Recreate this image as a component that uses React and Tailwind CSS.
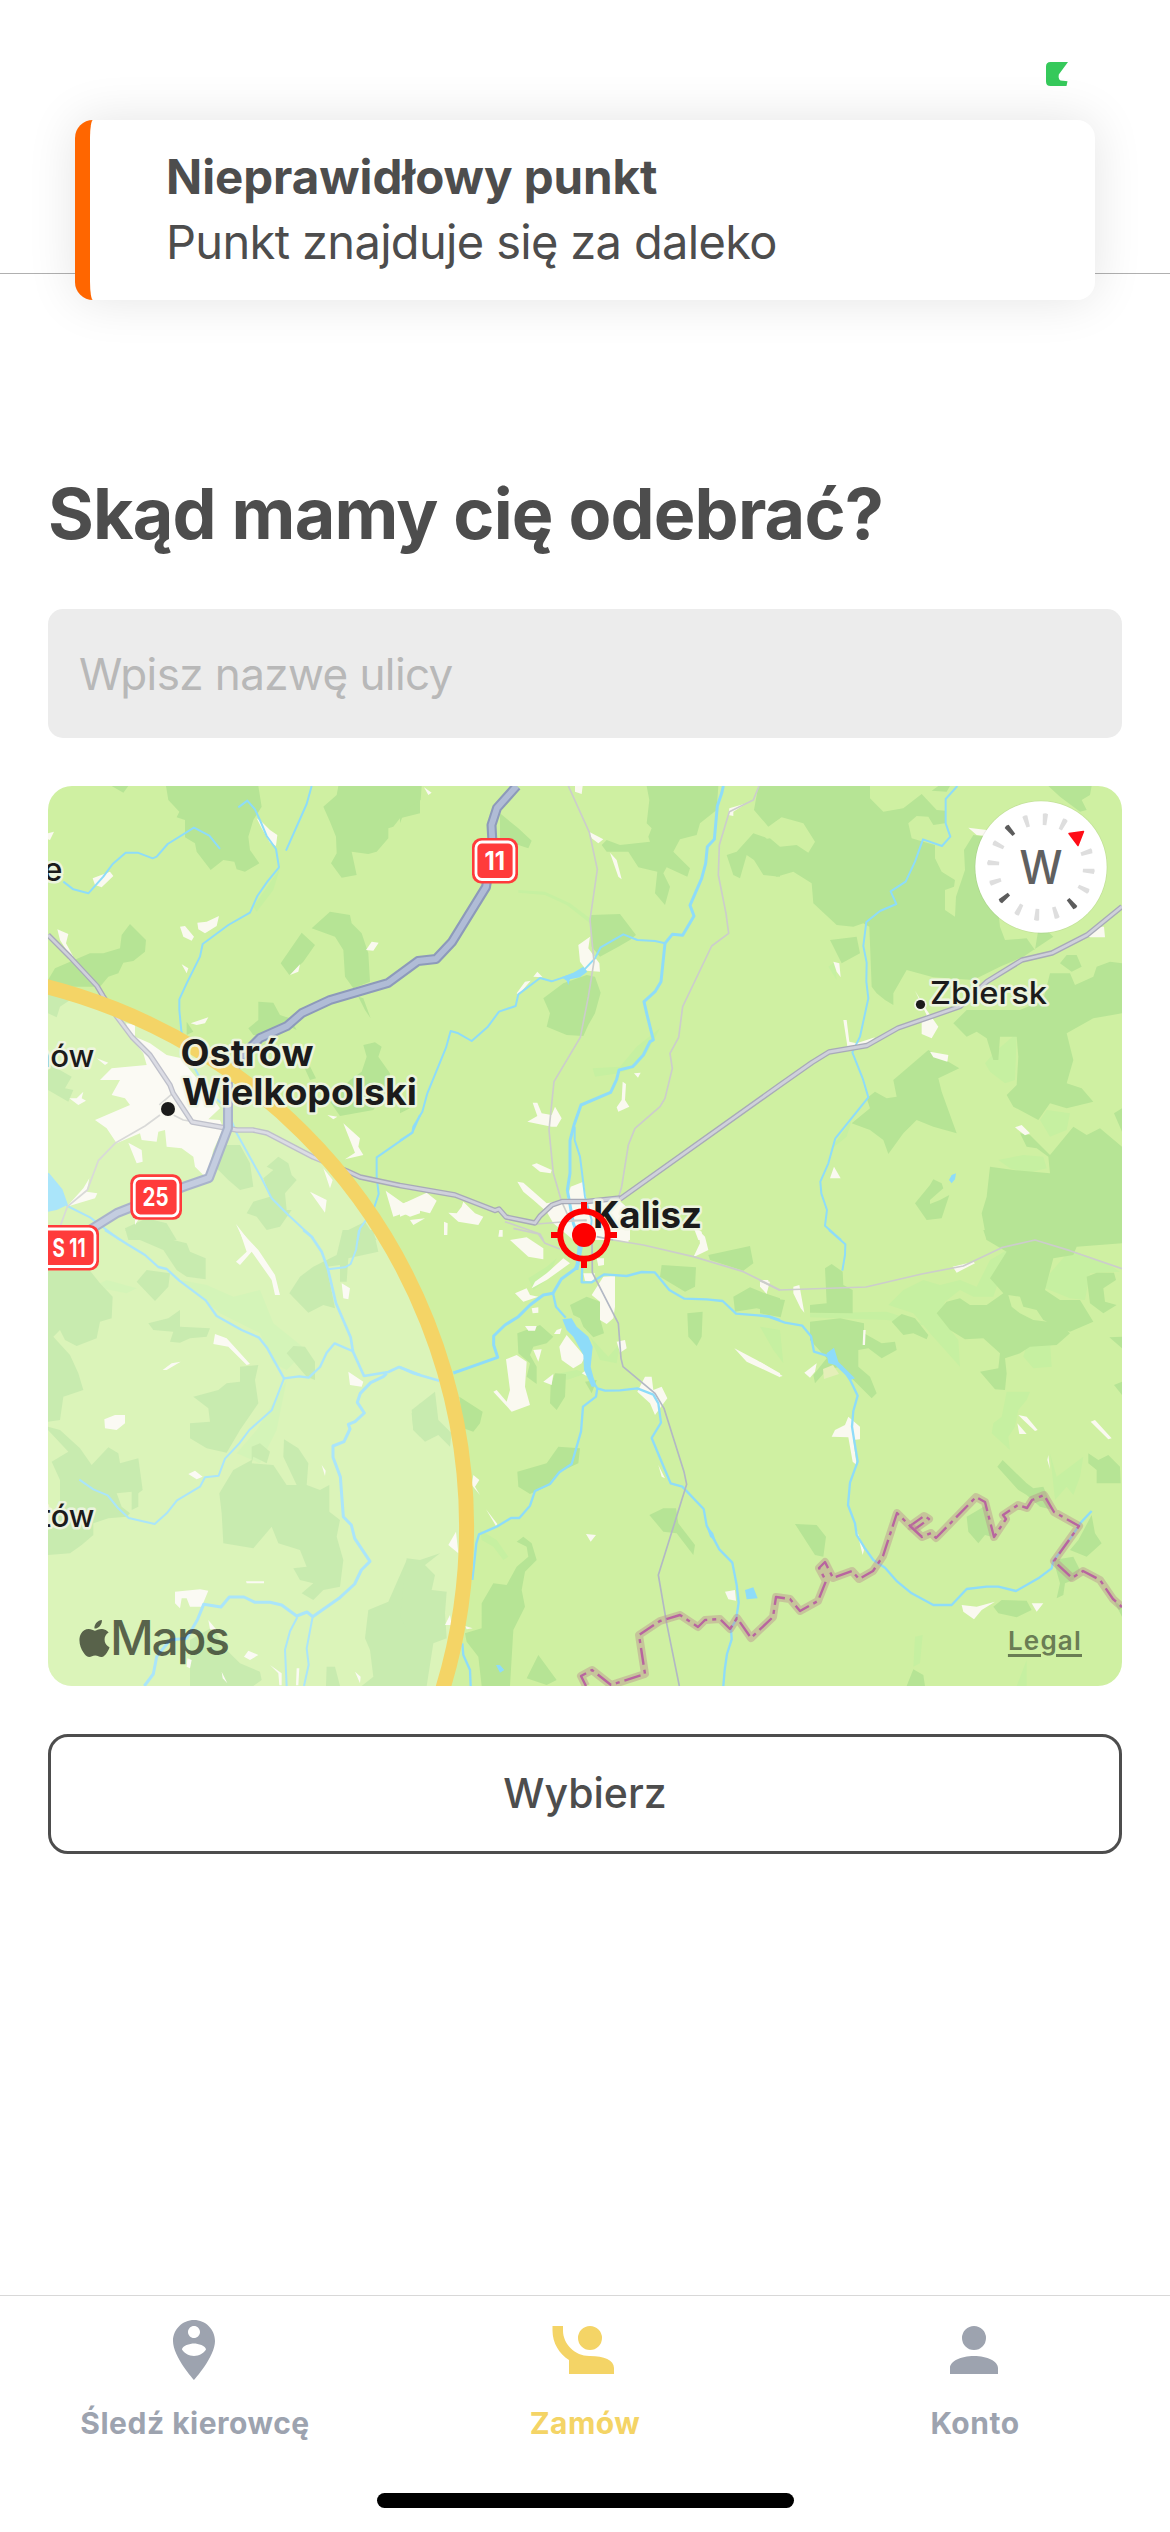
import React from "react";
import { SiApple } from "react-icons/si";

const FONT = "font-['Inter','Liberation_Sans',sans-serif]";

const WATER = "#8edcf9";

/* The map is drawn in six tiles, each in its own 3x coordinate space. */
const TILES = [
  {
    at: "translate(40 780) scale(0.33333)",
    meadow: "M140 350L170 405M640 380L720 265L700 330L650 395Z",
    forest:
      "M378 18H655L665 80L640 120L625 170L630 210L658 250L615 275L590 268L583 245L550 240L512 270L470 215L465 190L435 172L435 120L410 112L418 95L385 60Z M215 18H265L250 38Z M895 18H1140V100L1080 115L1060 140L1045 145L1045 175L1010 215L985 222L935 215L950 285L905 293L873 250L890 220L888 170L870 125L850 80L890 45Z M270 432L318 480L315 515L280 543L250 548L235 580L205 590L180 620L60 620L24 600L45 565L150 520L190 520L240 505L245 465Z M24 640L90 660L60 680L50 712L24 700Z M24 850L95 890L75 925L100 930L85 965L24 930Z M815 445L870 395L930 405L935 430L965 460L985 520L990 605L940 625L915 590L910 510L885 470Z M785 458L825 495L790 545L748 585L722 550Z M655 665L700 668L720 705L750 715L770 750L750 740L700 770L640 765L625 745L655 720Z M955 650L970 655L992 715L975 690Z M440 725L460 755L440 765Z M760 790L790 820L828 895L810 900Z M970 795L1005 787L1025 800L1015 830L1050 880L1045 930L1000 990L900 1008L870 965L930 900L965 875L980 830Z M530 1095L600 1095L630 1150L640 1220L600 1230L565 1200L515 1150Z M715 1130L745 1150L755 1185L770 1200L735 1240L740 1290L755 1290L720 1340L680 1350L650 1310L620 1300L640 1265L690 1250L670 1195L700 1170L680 1160Z M255 1345L320 1315L380 1330L410 1380H265Z M975 1325L1010 1380H910L925 1350Z",
    town:
      "M650 115L665 125L690 150L712 165L708 198L690 188L665 145Z M158 295L210 275L220 288L185 322L165 315Z M24 160L42 155L30 180L24 178Z M52 448L85 462L78 490L100 530L85 520L60 480Z M420 440L435 438L462 470L455 482L430 470Z M472 428L500 425L537 408L530 438L495 460L475 448Z M425 553L445 565L440 580Z M750 585L780 553L775 575Z M978 510L995 485L1016 488L1000 512Z M452 730L505 712L495 730L470 735Z M258 730L285 735L285 770L330 790L380 825L425 835L450 870L500 930L540 985L505 1018L540 1020L550 1045L520 1110L500 1195L465 1160L460 1130L425 1105L380 1100L375 1050L355 1055L350 1085L305 1080L300 1060L230 1090L200 1045L165 1020L200 1005L270 975L255 955L215 945L240 900L180 900L215 865L320 855L310 820L270 770Z M170 835L205 848L195 855Z M88 955L110 955L130 935L125 955L138 962L115 975Z M265 1088L305 1110L308 1145L290 1150Z M148 1195L140 1235L172 1240L165 1255L80 1280L130 1225Z M862 1005L892 1010L880 1018Z M910 1030L960 1075L955 1100L970 1125L915 1138L945 1118Z M850 1165L878 1200L870 1225Z M810 1235L860 1260L855 1298Z M1037 1232L1090 1270L1140 1255V1300L1110 1310L1090 1300L1060 1310Z M588 1332L625 1380H610Z M285 1320L300 1310L285 1335Z",
    lake: "M24 1185L65 1230L82 1275L50 1290L24 1295Z",
    rivers: [
      ["M70 305L100 328L145 340L190 290L218 252L257 218H293L338 235L350 230L383 192L462 143L508 167L540 207", 6],
      ["M595 82L622 62L645 88L662 125L680 168L708 207L717 262L682 305L652 348L630 398L565 435L488 492L480 530L440 610L418 658V690L424 752L445 830L500 930L560 985L590 1060L665 1195L695 1255L745 1305L820 1375", 6],
      ["M815 18L800 72L738 212", 6],
      ["M24 1180L65 1230L82 1278L150 1312L240 1380", 6],
      ["M1140 1005L1117 1058L1010 1132V1190L1016 1242L1000 1290L960 1345L953 1380", 6],
    ],
    thin: ["M360 1005L315 1038L225 1090L175 1142L142 1230L82 1280L62 1335", "M358 975L398 940M400 1005L430 1020L460 1025"],
    thinGrey: [],
  },
  {
    at: "translate(400 780) scale(0.33333)",
    meadow:
      "M355 330L435 335L510 370L570 415V430L500 375L435 345L355 338Z M578 865L660 860L710 800L780 745L740 820L700 865L655 880L585 890Z",
    forest:
      "M0 18H65L62 60L15 90L0 130Z M300 100L355 145L395 182L385 205L325 185L300 175Z M740 18H955L950 90L900 130L890 165L840 178L820 215L870 265L862 290L800 262L790 280L810 320L795 375L765 340L772 275L715 262L685 215L620 215L605 195L620 180L660 195L750 185L745 170L755 145L740 130L748 60Z M1075 18H1140V115L1105 140L1062 90Z M980 225L1010 215L1060 160L1095 172L1140 210V290L1090 285L1062 240L1040 225L1020 295L1000 285Z M572 405L660 402L708 465L690 480L655 500L600 530L575 500Z M430 655L490 610L560 585L585 590L602 638L585 700L565 735L550 768L500 765L440 740L450 700Z M0 980L30 985L0 1000Z",
    town:
      "M72 22L95 38L85 45Z M525 18H548L545 42L525 35Z M567 155L610 178L595 190L575 175Z M630 218L650 240L665 298L655 290Z M988 85L1040 70L1000 95L1000 108L985 105Z M535 495L570 470L565 505L598 550L600 575L560 572L540 545Z M350 640L375 605L392 602L355 645Z M400 590L412 575L428 592Z M702 880L722 878L714 893Z M668 905L678 912L675 960L688 980L655 995L650 982L665 960Z M398 968L412 968L425 1000L455 1005L465 980L485 1015L470 1040L455 1040L382 1025L412 1008Z M395 1155L410 1150L455 1170L452 1180L420 1175Z M352 1205L370 1208L440 1270L480 1262L500 1262L512 1220L550 1205L560 1260L650 1255L690 1290V1380H520L460 1330L440 1295L400 1260L370 1235Z M0 1275L80 1238L110 1262L90 1300L50 1290L0 1310Z M30 1320L75 1315L40 1335Z M145 1298L170 1300L185 1280L190 1265L225 1300L250 1310L235 1335L175 1325L160 1312Z M132 1325L143 1330L142 1365H132Z M298 1350L308 1350V1370H295Z M880 1340L905 1355L908 1380H895Z",
    lake: "M485 592L520 578L550 560L562 575L540 592L510 598L505 615L500 602Z",
    rivers: [
      ["M970 18L965 40L952 78L943 178L922 200L917 250L905 295L870 376L882 408L848 466L817 463L795 490", 9],
      ["M795 490L783 605L765 635L732 665L742 708L760 780L750 785L730 825L698 860L657 870L650 898L632 937L543 975L522 1035L510 1082V1180L502 1230L520 1330L540 1380", 9],
      ["M795 490L765 483L712 480L670 463L602 502L585 535L550 572L455 604L420 594L355 643L347 678L297 695L262 742L215 783L175 760L152 753L138 803L82 940L67 995L40 1040L37 1058L0 1082", 6],
      ["M524 1040V1080L540 1130L555 1250L575 1320L570 1380", 6],
    ],
    thin: [
      "M505 18L568 157L592 268L570 420L582 545L565 650L541 772L462 905L447 1050L460 1180L485 1265L510 1320L560 1322",
      "M1077 18L1060 60L988 95L958 195L955 285L978 400L986 460L935 498L848 680L836 772L810 820L817 865L795 955L780 980L705 1045L685 1095L665 1220L655 1255",
      "M315 1325L420 1362L430 1380M410 1332L560 1320",
    ],
    thinGrey: [],
  },
  {
    at: "translate(760 780) scale(0.33333)",
    meadow:
      "M675 850L705 815L770 760L765 900L735 910L690 875Z M715 1140L790 1125L850 1130L860 1165L800 1180L750 1165Z M840 1020L860 990L930 1000L920 1050L870 1070Z M275 1020L210 1110L260 1070Z M225 545L205 560L230 600Z",
    forest:
      "M0 18H330V55L370 95L430 85L485 42L530 90L555 92V130L520 135L505 110L470 108L445 130L455 175L490 185L525 195V235L545 275L585 300L582 320L555 330V390L585 410L588 350L615 270L612 210L640 165L680 170L700 260L720 440L735 480L800 475L825 510L838 430L880 470L790 530L720 560L640 600L520 592L440 570L400 640V675L375 660L350 640L335 620L328 440L310 430L280 440L230 435L160 370L155 310L100 275L50 290L0 265V180L30 175L60 200L110 195L145 218L165 185L130 130L65 112L30 132L0 100Z M535 18H570L560 35L515 32Z M865 18H995L990 45L965 60L980 90L960 95L900 50Z M210 480L290 470L300 520L245 550Z M900 550L920 525L950 525L965 560L935 575Z M870 580H930L945 615L1000 590L1010 560L1050 545L1086 550V700L1000 715L920 760L940 840L920 910L965 925L1000 965L920 985L870 970L835 1020L760 980L740 945L770 915L775 830L770 770L720 770L715 840H700L680 775L650 755L620 770L580 730L620 690L780 690L850 660Z M505 810L598 865L535 895L545 935L590 1060L520 1040L470 1020L430 1060L385 1122L370 1080L330 1050L275 1030L330 985L320 955L345 935L380 955L410 950L400 900Z M1062 1000L1086 985V1055Z M1086 1050V1380H680L665 1300L680 1250L690 1160L760 1170L870 1180L865 1130L830 1105L800 1100L780 1060L810 1065L870 1125L940 1040L980 1065L1020 1045L1086 1100Z M465 1270L510 1215L520 1198L545 1210L550 1225L510 1260V1272L540 1260L568 1245L545 1315L500 1320Z",
    town:
      "M625 143L680 150V168L650 165Z M975 460L1010 440H1032L1035 472H990Z M220 545L238 550L242 592L230 575Z M465 632L500 690L535 740L515 775L485 762L485 725L500 705Z M250 720L260 720L268 785L290 790L345 772L320 795L262 798Z M510 815L565 825L562 845L520 832Z M765 1042L785 1035L810 1060L795 1066Z M222 1160L242 1195L210 1195Z",
    lake: "M575 1185L588 1180L585 1198L575 1210L567 1200Z",
    rivers: [
      ["M592 18L557 57V130L571 170L546 198L489 178L465 245L437 305L392 334L409 372L360 393L319 426L310 498L320 548L319 605L325 655L300 770L277 817L308 895L325 952L226 1075L205 1150L181 1205L184 1240L201 1290L195 1337L243 1380", 6],
    ],
    thin: [],
    thinGrey: [],
  },
  {
    at: "translate(40 1230) scale(0.33333)",
    meadow:
      "M420 150L500 165L580 200L660 180L700 280L800 360L740 420L700 400L660 310L540 250Z M740 450L710 600L660 700L590 670L650 600Z M160 170L200 150L290 175L260 190Z",
    forest:
      "M255 0H375L400 30L440 40L450 65L497 85V148L440 140L410 120L370 60L300 30Z M908 0H1000L1015 65L925 85L920 155L900 155V105L860 110L885 235L850 225L805 248L748 190L780 140L820 110L890 75Z M24 122L150 122L180 160L218 200L215 265L180 275L170 325L110 348L75 330L60 300L40 320L90 375L115 430L130 480L70 500L60 570L24 575Z M290 155L320 120L390 130L385 170L345 213Z M325 280L385 265L420 240V290L510 295L500 320L450 325L420 338L390 335L400 305L340 300Z M740 370L760 348L795 350L825 395L825 450L800 440Z M600 410L655 405L645 450L655 520L600 600L560 668L500 655L450 625V580L510 575L505 535L460 500L535 480L560 460L600 455Z M24 590L60 600L120 655L155 705L205 652L235 670L240 700L295 685L308 780L295 790V830L275 840V785L230 790L245 830L270 850L260 860L205 865L160 880V915L125 945L90 970L24 975V900L60 820L60 750L35 695L85 665L24 600Z M635 650L660 640L690 665L680 700L640 680L635 700L700 705L740 765L770 765L730 680L732 628L775 655L805 700L800 765L840 780L868 765V845L900 870L890 920L910 990L900 1070L850 1080L820 1110L785 1090L820 1060L780 1050L760 1015L800 1010L780 960L715 940L695 890L640 955L550 940L545 850L538 790L580 720L635 690Z M1115 550L1140 520V620L1120 600Z M985 1140L1045 1115L1100 990L1140 990V1368H965L1000 1340L990 1260L975 1225Z M450 1230L520 1190L550 1250L600 1300L660 1325L665 1350L640 1368H450Z M860 1310L885 1310L900 1368H858Z",
    town:
      "M598 0L655 60L705 135L720 195L705 195L695 150L635 65L600 105L588 95L620 65Z M905 160L930 175L925 208L910 205Z M525 312L560 325L630 402L620 405L565 350L520 342Z M368 420L395 400L422 395L380 420Z M193 568L225 555L255 555V580L230 600L195 595Z M925 425L970 455L965 470L930 465Z M445 732L465 722L488 740L470 748Z M845 705L857 722L855 738Z M618 1054H672V1060H620Z M405 1085L480 1078L505 1082L485 1130L450 1130L440 1105L425 1105L420 1135L405 1120Z M505 1170L530 1200L510 1198Z M612 1280L625 1262L655 1275L630 1290Z M690 1305L725 1330V1366H718L715 1330Z M545 1325L562 1360L548 1345Z M945 1325L962 1340L960 1360Z M442 1285L455 1290L450 1315L440 1310Z M770 1315H778L775 1366H768Z",
    lake: "",
    rivers: [
      ["M195 0L262 43L315 75L355 111L380 117L418 152L497 211L530 258L605 300L657 323L682 355L732 445L778 439L806 443L840 411L860 368L884 340L937 363", 7],
      ["M732 445L695 541L628 600L598 640L555 686L536 737L495 742L480 770L411 811L380 850L344 882L266 864L234 834L203 796L160 778L118 749", 6],
      ["M790 0L815 20L845 65L864 118L888 220L932 322L939 365L972 438L1045 426L1077 411L1140 435", 8],
      ["M957 0L948 60L932 102L915 112L864 118", 6],
      ["M1040 430L1030 440L992 458L961 490L952 517L973 549L945 575L925 583L930 597L912 635L879 648V682L901 740L910 860L934 885L944 925L990 994L964 1020L944 1062L897 1105L818 1160L801 1146L770 1158L725 1125L690 1117H645L612 1101H568L543 1131L491 1123L472 1170L440 1225L390 1230L350 1280L340 1332L313 1368", 9],
      ["M772 1162L750 1204L735 1259L740 1368", 6],
      ["M818 1160L800 1255L806 1304L792 1368", 6],
    ],
    thin: [],
    thinGrey: [],
  },
  {
    at: "translate(400 1230) scale(0.33333)",
    meadow:
      "M470 85L440 110L385 145L400 180L440 150Z M570 320L625 380L660 340L650 400L600 390Z M560 430L500 450L480 430L530 420Z M240 900L290 930L325 980L310 990L280 950L245 930Z",
    forest:
      "M925 75L1050 48L1060 100L1030 122L930 90Z M785 105L888 112L885 170L855 185L780 140Z M1000 200L1050 172L1095 190L1140 205V250L1070 235L1005 245Z M510 225L560 200L600 215V265L612 310L580 322L550 290L540 265L520 255Z M862 250L908 245L905 320L890 348L865 320Z M352 310L420 285L460 320L440 340L400 350L390 375L410 410V462L380 440L390 400L355 370Z M465 430L498 432L495 500L470 540L450 520L452 465Z M555 455L590 450L575 490Z M178 500L248 545L240 580L220 605L190 595Z M35 540L105 485L115 570L155 610L150 650L115 615L75 635L40 600Z M352 725L440 700L475 650L540 655L535 700L480 725L450 765L390 792L355 770Z M748 855L790 835L828 835L835 880L885 945L880 975L830 910L790 905Z M350 935L370 920L395 940L410 990L375 1025L365 1080L375 1130L340 1200L330 1368H245L235 1280L200 1235L195 1210L245 1195V1120L280 1060L320 1065L350 1010L385 980L380 950Z M20 985L60 990L120 970L75 1005L105 1035L95 1080L140 1085L135 1150L140 1225L100 1240L80 1368H0V1210L20 1200L0 1160Z M415 1275L470 1350L440 1365L380 1345Z",
    town:
      "M330 30L380 22L430 55L430 88L385 80Z M490 85L510 100L440 150L395 175L405 155L440 130Z M345 190L380 175L390 195L415 200L370 215Z M395 235L415 232V248L398 250Z M375 288L410 288L405 302L385 302Z M470 300L485 295L480 312L462 312Z M478 350L500 315L555 380L545 400L520 415L485 390Z M400 360L425 358L415 395Z M318 388L350 375L380 395L375 470L390 525L335 545L280 485L290 480L320 515L330 480Z M430 455L460 432L455 465Z M575 195L610 140L645 138L645 230L640 265L620 282L600 270L600 215Z M550 130H585L580 155L555 152Z M650 335L675 330L680 355L660 368Z M590 85H612V105L595 108Z M625 0H690L685 38L650 30Z M895 0L915 20L925 60L880 82L900 40Z M1085 150L1110 155L1100 190L1088 170Z M712 485L735 440L755 440L760 480L785 470L802 505L765 555L750 520Z M1003 355L1070 390L1140 430V442L1040 395Z M775 705L795 745L785 740Z M220 735L238 750L225 770L240 795L215 765Z M258 838L292 882L288 888Z M168 905L175 970L145 945Z M135 1185L150 1155L155 1185Z M558 912L588 915L572 935Z M975 1085L1005 1080L1008 1112L985 1108Z M195 1188L218 1195L200 1198Z M545 430L560 420V438Z",
    lake: "M487 268L515 265L530 290L565 320L578 350L572 410L580 440L590 470L575 470L552 420L550 375L520 320L500 300Z M535 30H548V55L535 120L525 120Z M1035 1080L1060 1072L1073 1105L1040 1108Z M288 1305L300 1305L313 1320L300 1328Z M918 885L940 910L948 935L930 920Z",
    rivers: [
      ["M535 100L525 117L484 147L459 190L430 195L390 225L355 260L315 285L281 318V345L293 382L200 415L160 429", 9],
      ["M459 190L468 230L497 263", 7],
      ["M547 100L545 157L575 157L613 133L680 138L725 126L764 127L808 180L853 206L920 208L968 213L1008 251L1108 259L1140 270", 7],
      ["M0 412L40 430L118 452", 8],
      ["M578 455L592 475L615 482L660 481L712 475L760 494L775 520L783 578L755 624L790 708L812 760L847 770L911 837L920 887L958 958L997 998L1010 1065L1016 1118L1008 1170L993 1195L995 1228L981 1272L974 1320L970 1368", 7],
      ["M592 475L588 500L549 530L543 605L515 702L478 727L450 762L405 783L390 827L358 864H333L290 890L237 913L229 940L217 1050", 7],
      ["M187 1240L190 1275L210 1320L212 1368", 7],
    ],
    thin: ["M340 -5L415 12L435 40L480 57M640 30L730 45L880 80L1030 125L1140 180"],
    thinGrey: ["M576 40L577 128L655 280L663 385L669 410L765 490L792 535L852 725L860 763L775 1035L800 1180L838 1368M590 20L640 30"],
  },
  {
    at: "translate(760 1230) scale(0.33333)",
    meadow:
      "M490 150L540 165L600 150L650 170L690 90L750 55L700 200L640 200L600 180L555 215L540 260L595 330L600 410L510 310L460 250L385 225L430 180Z M870 130L930 60L1040 100L1080 125L990 130L975 210L930 205L855 175Z M800 345L870 335L875 410L820 415L790 380Z M740 485L810 485L800 510L775 540L765 590L745 620L750 660L695 610L700 580L725 560Z M870 670L890 740L970 680L960 740L940 795L920 770L885 810Z M0 290L60 300L70 400L40 360Z M465 1220L488 1215L480 1300L460 1310Z M770 1368L800 1290L800 1368Z M150 250L380 245L520 290L380 270L150 262Z",
    forest:
      "M670 0H1086V40L950 50L940 75L880 85L855 180L900 210L960 210L1000 275L930 305L850 270L830 240L790 230L780 200L745 195L755 230L780 250L820 270L900 280L930 310L890 345L810 350L780 370L735 385L740 430L735 480L705 478L660 425L715 415L720 370L670 325L615 328L570 300L530 250L560 215L600 205L630 225L680 225L730 190L690 145L740 65L680 30Z M980 140L1010 128H1062L1068 150L1030 175L1035 215L1070 225L1030 250L990 220Z M195 115L215 102L248 125L250 165L278 180V250L150 248V225L200 220Z M0 200L75 210L62 262L0 250Z M150 275L240 265L312 280V310L365 340L405 335L410 360L365 385L325 355L295 360V410L330 440L350 490L335 505L290 460L240 410L200 420L165 460L160 435L200 385L150 330Z M395 275L425 252L465 265L505 315L500 328L460 310L430 315Z M1048 322L1086 320V355Z M1062 465L1086 455V495Z M985 670L1015 690L1045 675L1080 710L1082 760H1010V720L985 700Z M712 710L728 690L800 760L820 775L850 770L880 840L840 830L800 795L775 780Z M105 882L170 885L198 920L190 980L165 975Z M620 860L680 825L695 920L675 915L655 940L625 905Z M955 930L995 855L1005 910L1025 940L980 980L930 960Z M880 990L940 980L960 1020L940 1050L915 1060L910 1095L890 1105L900 1060Z M700 1130L725 1110L800 1112L815 1140L770 1162L715 1150Z M1060 1110L1086 1130V1160Z M440 1368L460 1318L490 1335L495 1368Z",
    town:
      "M0 150L25 150L20 192L0 170Z M100 170L118 165L133 248L122 235L100 190Z M578 110L640 95L645 100L590 128Z M310 300H317L315 345H308Z M0 395L68 438L60 440L0 408Z M133 428L170 400L165 425L150 443Z M265 560L300 590L300 628L280 630L290 705L278 695L265 622L215 620L225 600L255 585Z M775 555L800 560L833 600L825 603L790 570Z M772 580L800 612H778Z M992 575L1005 570L1055 625L1045 628Z M865 675L870 718L862 690Z M605 1125L650 1130L705 1115L665 1140L642 1168L610 1145Z M815 1120L850 1120L830 1145Z M290 900L312 960L308 975Z",
    lake: "M200 370L222 353L235 395L285 445L272 450L225 405L205 400Z",
    rivers: [
      ["M207 0L256 43L255 75L247 122", 6],
      ["M0 257L25 260L75 278L127 287L153 319L162 365L200 377L245 410L272 453L293 497L280 543L276 590L284 640L293 695L270 758L264 825L285 880L290 915L315 955L340 990L375 1013L412 1055L455 1090L520 1125H575L620 1077L680 1070H715L768 1083L835 1045L875 1015L880 993L935 920L963 877L995 843", 7],
    ],
    thin: ["M0 152L57 180L318 171L485 132L610 108L725 53L825 30L930 62L1086 116"],
    thinGrey: [],
  },
];

const MAIN_ROAD =
  "M516.7 786L497 808L491.5 825L492.7 847L486 887L452 942L436 959L418 961L388 983L330 1000L302 1013L287 1026L260 1038L240 1058L228 1082V1128L209 1178L183 1187L117 1213L93 1228L60 1250L40 1258";
const SIDE_ROAD =
  "M48 935L70 957L97 986L103 996L117 1017L132 1037L150 1055L170 1085L173 1093L192 1122L237 1130H253L267 1133L313 1157L347 1171L360 1177L400 1185.5L455 1195L495 1210.5L499 1209L506 1217L535 1223L540 1216L552 1205L562 1201.5H587L620 1198";
const EAST_ROAD =
  "M620 1199L780 1085L812 1062.5L829 1052L867 1045.5L898 1028L927 1018L960 1006.5L987 981.5L1022 960L1052 953L1087 935L1122 906.5";
const BORDER_WEST =
  "M586 1686L581 1676L592 1670L611 1685L645 1674L639 1635L660 1621L680 1615L698 1627L705 1620L720 1619L730 1629L737 1618L751 1638L773 1617L776 1597L790 1599L800 1611L818 1601L826 1581L819 1568L825 1562L833 1578L852 1571L859 1579L873 1571L883 1556L897 1513L910 1526L924 1516L929 1519L915 1529";
const BORDER_EAST =
  "M910 1526L922 1537L931 1533L936 1538L976 1497L985 1502L994 1537L1006 1519L1003 1515L1018 1505L1027 1508L1032 1500L1044 1495L1054 1512L1079 1526L1054 1561L1072 1578L1083 1571L1100 1580L1113 1599L1122 1607";

const TICKS = Array.from({ length: 16 }, (_, i) => i).filter((i) => i !== 2);

function MapLabel({ x, y, size, weight = 700, length, children }) {
  return (
    <text
      x={x}
      y={y}
      fontSize={size}
      fontWeight={weight}
      textLength={length}
      lengthAdjust="spacingAndGlyphs"
      fill="#1b1b1b"
      stroke="#f1f5e6"
      strokeOpacity="0.9"
      strokeWidth="5"
      strokeLinejoin="round"
      paintOrder="stroke"
    >
      {children}
    </text>
  );
}

function RoadBadge({ x, y, w, h = 45.5, tx, tl, children }) {
  return (
    <g>
      <rect x={x} y={y} width={w} height={h} rx="9" fill="#ff3b3b" />
      <rect x={x + 4} y={y + 4} width={w - 8} height={h - 8} rx="6" fill="none" stroke="#fff" strokeWidth="2.8" />
      <text x={tx} y={y + 32} fontSize="25" fontWeight="700" fill="#fff" textLength={tl} lengthAdjust="spacingAndGlyphs">
        {children}
      </text>
    </g>
  );
}

function Compass() {
  return (
    <g>
      <circle cx="1041" cy="867" r="66.5" fill="#000" opacity="0.06" />
      <circle cx="1041" cy="867" r="65.7" fill="#fff" />
      {TICKS.map((i) => (
        <path
          key={i}
          d="M1038.4 813.8q2.6 -1.6 5.2 0L1042.8 825h-3.6Z"
          fill={i % 4 === 2 ? "#5c5c5c" : "#dedede"}
          transform={`rotate(${4.8 + i * 22.5} 1041 867)`}
        />
      ))}
      <path d="M1069 833.5L1083.5 831.5L1078 845.5Z" fill="#ff0d17" stroke="#ff0d17" strokeWidth="1.5" strokeLinejoin="round" />
      <text x="1041" y="884" fontSize="47" fontWeight="500" textAnchor="middle" textLength="43" lengthAdjust="spacingAndGlyphs" fill="#606060">
        W
      </text>
    </g>
  );
}

function MapView() {
  return (
    <div className="relative h-[900px] w-full overflow-hidden rounded-[24px] bg-[#cff0a2]">
      <svg className="block h-full w-full" viewBox="48 786 1074 900" fontFamily="Inter, 'Liberation Sans', sans-serif">
        {TILES.map((t) => (
          <path key={t.at} transform={t.at} d={t.meadow} fill="#c6f0a1" />
        ))}
        {TILES.map((t) => (
          <path key={t.at} transform={t.at} d={t.forest} fill="#b6e495" />
        ))}
        {TILES.map((t) => (
          <path key={t.at} transform={t.at} d={t.town} fill="#faf9f0" />
        ))}
        <path d="M823 1369L833 1365L839 1374L824 1379Z" fill="#e4efb8" />
        <g fill="none" strokeLinejoin="round">
          {TILES.map((t) => (
            <g key={t.at} transform={t.at}>
              {t.rivers.map(([d, w]) => (
                <path key={d} d={d} stroke={WATER} strokeWidth={w} />
              ))}
              <path d={t.lake} fill={WATER} />
              {t.thin.map((d) => (
                <path key={d} d={d} stroke="#cccdcb" strokeWidth="5" />
              ))}
              {t.thinGrey.map((d) => (
                <path key={d} d={d} stroke="#b2b8c4" strokeWidth="5" />
              ))}
            </g>
          ))}
          <path d={SIDE_ROAD} stroke="#a8aab8" strokeWidth="5.4" />
          <path d={SIDE_ROAD} stroke="#cfd1db" strokeWidth="2.8" />
          <path d={EAST_ROAD} stroke="#a8aab8" strokeWidth="5.4" />
          <path d={EAST_ROAD} stroke="#cfd1db" strokeWidth="2.8" />
          <path d={MAIN_ROAD} stroke="#8d9aba" strokeWidth="10" />
          <path d={MAIN_ROAD} stroke="#b0bcd6" strokeWidth="5.8" />
          {[BORDER_WEST, BORDER_EAST].map((d) => (
            <g key={d}>
              <path d={d} stroke="#b98a90" strokeOpacity="0.42" strokeWidth="8" />
              <path d={d} stroke="#b8659f" strokeWidth="2.4" strokeDasharray="17 5 4 5" />
            </g>
          ))}
        </g>

        <circle cx="-91.4" cy="1527.4" r="558" fill="#fff" fillOpacity="0.25" stroke="none" />
        <circle cx="-91.4" cy="1527.4" r="558" fill="none" stroke="#f4d466" strokeWidth="15" />

        <circle cx="168" cy="1109" r="8.6" fill="#faf9f0" />
        <circle cx="168" cy="1109" r="7" fill="#1b1b1b" />
        <circle cx="920.5" cy="1004.5" r="6.4" fill="#f1f5e6" />
        <circle cx="920.5" cy="1004.5" r="4.6" fill="#1b1b1b" />

        <MapLabel x={180.5} y={1065.7} size={37} length={133}>Ostrów</MapLabel>
        <MapLabel x={182} y={1104.7} size={37} length={235}>Wielkopolski</MapLabel>
        <MapLabel x={593} y={1227.7} size={37} length={109}>Kalisz</MapLabel>
        <MapLabel x={930} y={1003.7} size={31} weight={500} length={117}>Zbiersk</MapLabel>
        <MapLabel x={43.5} y={880.7} size={32} weight={500} length={19}>e</MapLabel>
        <MapLabel x={31.5} y={1066.7} size={31} weight={500} length={63}>nów</MapLabel>
        <MapLabel x={40.5} y={1526.7} size={31} weight={500} length={54}>tów</MapLabel>

        <RoadBadge x={130.3} y={1174.3} w={51.7} tx={142.5} tl={26}>25</RoadBadge>
        <RoadBadge x={472} y={838} w={46} tx={484.5} tl={20.5}>11</RoadBadge>
        <RoadBadge x={36} y={1225} w={63} tx={52.5} tl={33}>S 11</RoadBadge>

        <g fill="none" stroke="#fe0000" strokeWidth="6">
          <circle cx="584" cy="1235" r="23.8" />
          <path d="M584 1202v8M584 1260v8M551 1235h8M609 1235h8" />
        </g>
        <circle cx="584" cy="1235" r="12" fill="#fe0000" />
        <Compass />
      </svg>

      <div className="absolute bottom-[18px] left-[28px] flex items-center text-black/60">
        <SiApple className="h-[37px] w-[37px]" />
        <span className="-ml-[3px] text-[48px] leading-[60px] font-medium tracking-[-2.2px]">Maps</span>
      </div>
      <span className="absolute right-[40px] bottom-[27px] text-[26px] leading-[36px] font-semibold tracking-[1.2px] text-[#6a7d54] underline decoration-[3px] underline-offset-[4px]">
        Legal
      </span>
    </div>
  );
}

const TABS = [
  {
    label: "Śledź kierowcę",
    tone: "text-[#9da3af]",
    d: "M12 2C8.14 2 5 5.14 5 9c0 5.25 7 13 7 13s7-7.75 7-13c0-3.86-3.14-7-7-7zm0 2c1.1 0 2 .9 2 2 0 1.11-.9 2-2 2s-2-.89-2-2c0-1.1.9-2 2-2zm0 10c-1.67 0-3.14-.85-4-2.15.02-1.32 2.67-2.05 4-2.05s3.98.73 4 2.05c-.86 1.3-2.33 2.15-4 2.15z",
  },
  {
    label: "Zamów",
    tone: "text-[#f4d466]",
    d: "M1.5,4V5.5C1.5,9.65 3.71,13.28 7,15.3V20H22V18C22,15.34 18.67,14 14,14C14,14 13.83,14 13.75,14C9,14 5,10 5,5.5V4M14,4A4,4 0 0,0 10,8A4,4 0 0,0 14,12A4,4 0 0,0 18,8A4,4 0 0,0 14,4Z",
  },
  {
    label: "Konto",
    tone: "text-[#9da3af]",
    d: "M12,4A4,4 0 0,1 16,8A4,4 0 0,1 12,12A4,4 0 0,1 8,8A4,4 0 0,1 12,4M12,14C16.42,14 20,15.79 20,18V20H4V18C4,15.79 7.58,14 12,14Z",
  },
];

function Toast() {
  return (
    <div className="absolute top-[120px] left-[75px] flex h-[180px] w-[1020px] flex-col rounded-[18px] border-l-[15px] border-[#ff6600] bg-white pt-[24px] pl-[76px] text-[#4d4d4d] shadow-[0_0_50px_rgba(0,0,0,0.11)]">
      <strong className="text-[47.500px] leading-[65px] font-bold tracking-[-0.050px]">Nieprawidłowy punkt</strong>
      <span className="text-[47px] leading-[65px] tracking-[-0.660px]">Punkt znajduje się za daleko</span>
    </div>
  );
}

export default function App() {
  return (
    <div className={`relative flex h-[2532px] w-[1170px] flex-col overflow-hidden bg-white ${FONT}`}>
      <header className="flex h-[274px] items-start justify-end border-b border-[#b0b0b0] pt-[62px] pr-[102px]">
        <svg className="h-[24px] w-[22px]" viewBox="0 0 22 24">
          <path d="M4.500 0H22L12.800 12.500Q11.500 19 17 18.800L21.500 19.200L20.500 24H4.500Q0 24 0 19.500V4.500Q0 0 4.500 0Z" fill="#36c95b" />
        </svg>
      </header>
      <Toast />

      <main className="flex grow flex-col px-[48px] pt-[200px]">
        <h1 className="h-[80px] text-[70px] leading-[80px] font-bold tracking-[-0.840px] whitespace-nowrap text-[#4d4d4d]">
          Skąd mamy cię odebrać?
        </h1>
        <input
          className="mt-[55px] h-[129px] w-full rounded-[15px] bg-[#ececec] px-[31px] text-[44px] tracking-[-0.600px] outline-none placeholder:text-[#b8b8b8]"
          placeholder="Wpisz nazwę ulicy"
        />
        <div className="mt-[48px]">
          <MapView />
        </div>
        <button className="mt-[48px] h-[120px] w-full rounded-[20px] border-[3px] border-[#4d4d4d] text-[41px] font-medium text-[#4d4d4d]">
          Wybierz
        </button>
      </main>

      <nav className="h-[237px] border-t border-[#d8d8d8]">
        <div className="grid grid-cols-3">
          {TABS.map((tab) => (
            <div key={tab.label} className={`flex flex-col items-center pt-[18px] ${tab.tone}`}>
              <svg className="mr-[2px] h-[72px] w-[72px]" viewBox="0 0 24 24" fill="currentColor">
                <path d={tab.d} />
              </svg>
              <span className="mt-[17px] text-[30px] leading-[40px] font-bold tracking-[0.500px]">{tab.label}</span>
            </div>
          ))}
        </div>
        <div className="mx-auto mt-[50px] h-[15px] w-[417px] rounded-full bg-black" />
      </nav>
    </div>
  );
}
